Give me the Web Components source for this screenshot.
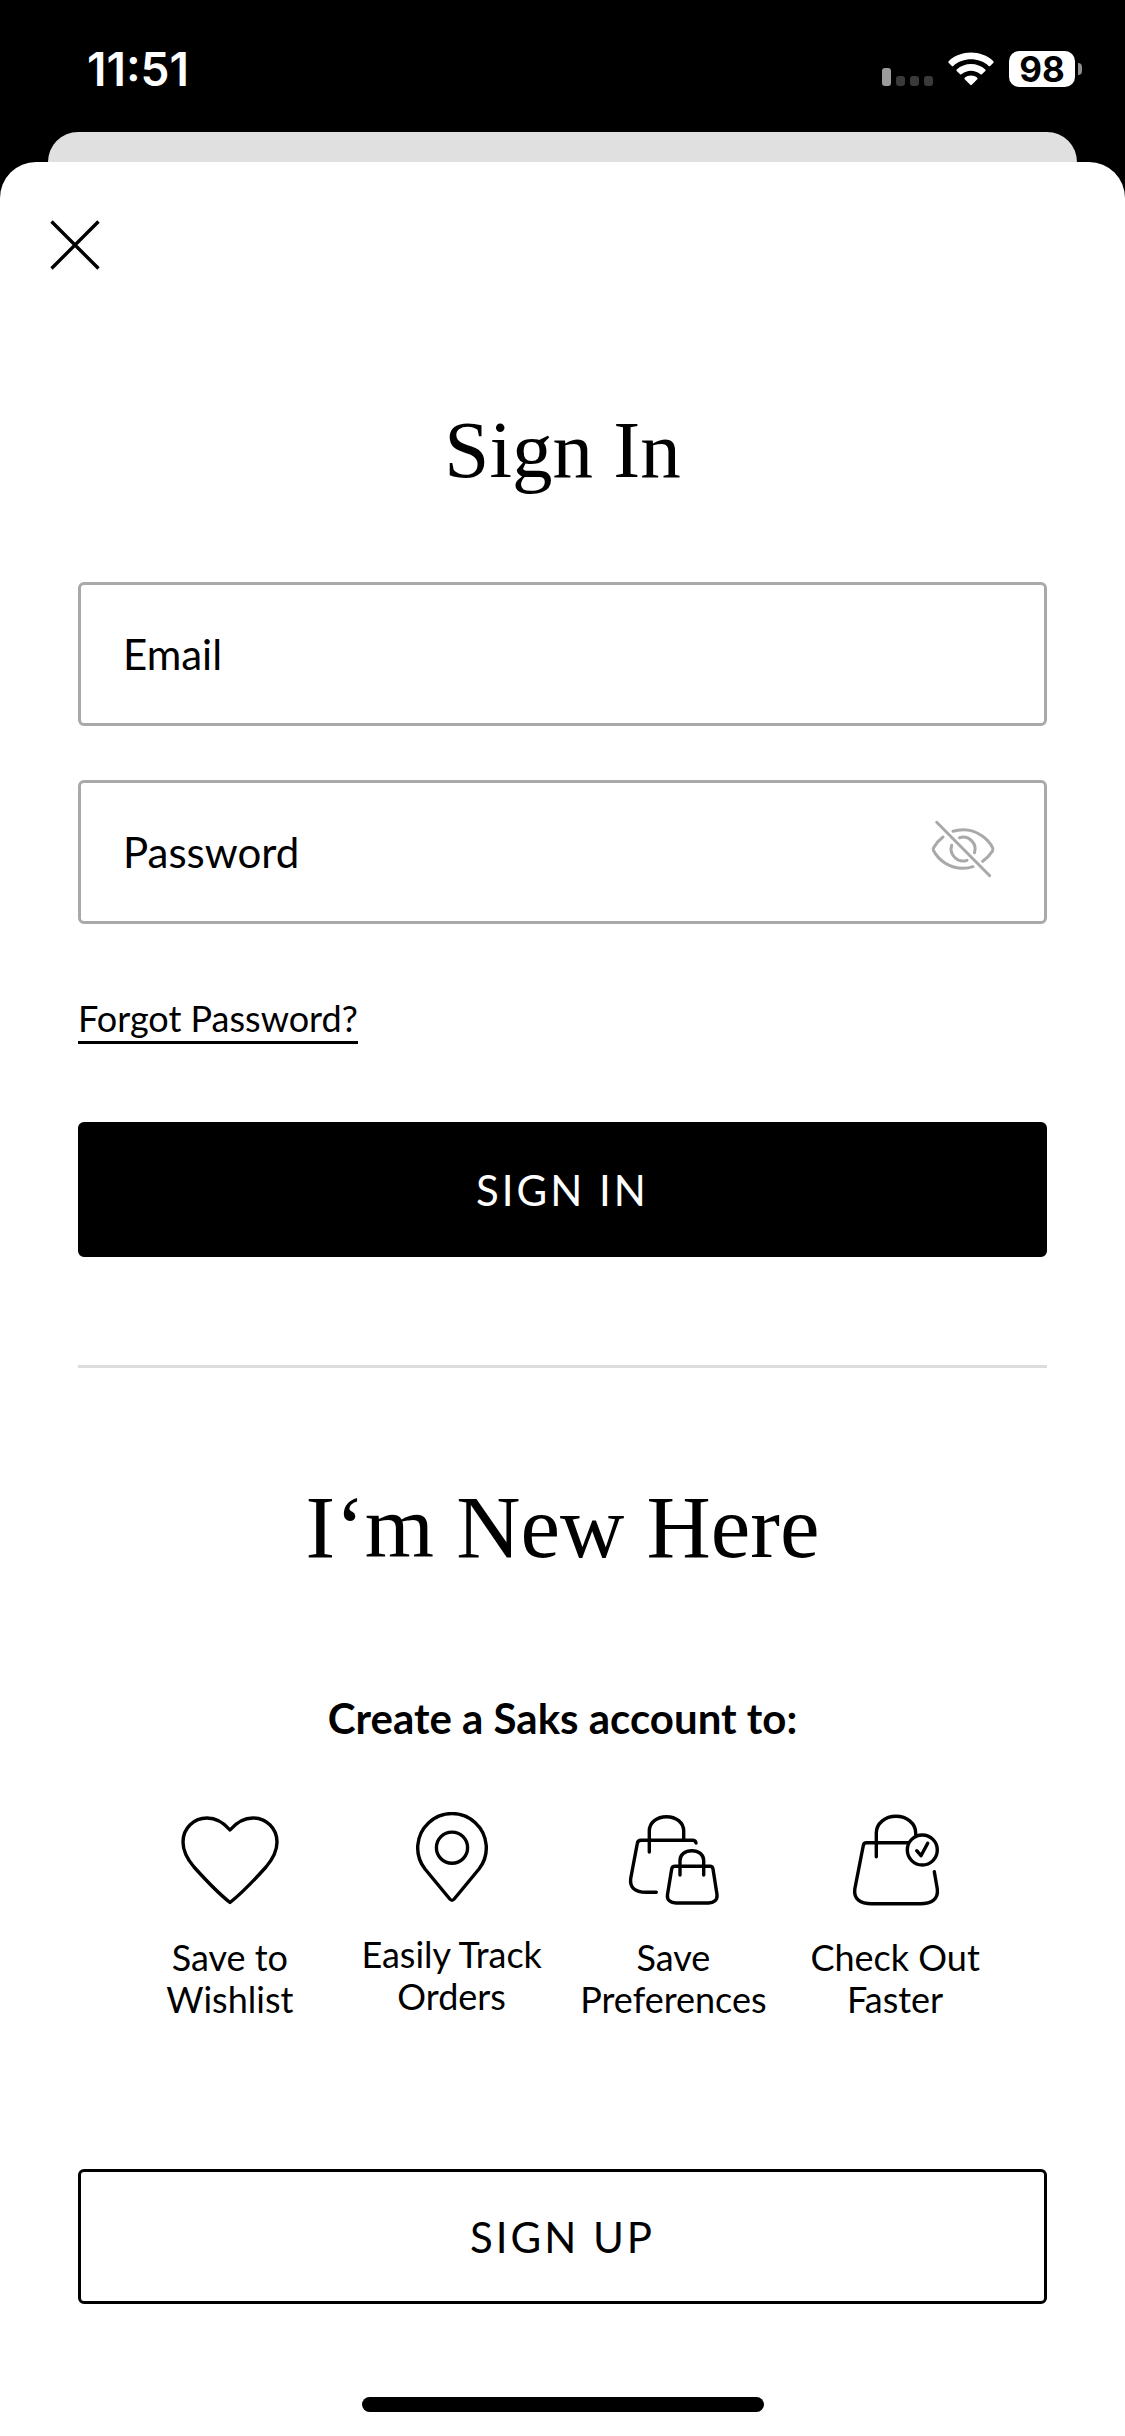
<!DOCTYPE html>
<html lang="en">
<head>
<meta charset="utf-8">
<meta name="viewport" content="width=device-width, initial-scale=1">
<title>Sign In</title>
<style>
  html { background: #000; }
  body {
    margin: 0;
    min-height: 100vh;
    display: flex;
    flex-direction: column;
    color: #000;
    font-family: Lato, "Liberation Sans", sans-serif;
  }
  account-sheet { flex: 1; }
</style>
</head>
<body>
  <status-bar time="11:51" battery="98"></status-bar>
  <account-sheet>
    <section-title size="small">Sign In</section-title>
    <sign-in-form></sign-in-form>
    <section-title slot="new">I‘m New Here</section-title>
    <benefit-list slot="new">
      <span slot="lead">Create a Saks account to:</span>
      <benefit-item icon="heart">Save to<br>Wishlist</benefit-item>
      <benefit-item icon="pin">Easily Track<br>Orders</benefit-item>
      <benefit-item icon="bags">Save<br>Preferences</benefit-item>
      <benefit-item icon="checkout">Check Out<br>Faster</benefit-item>
    </benefit-list>
    <action-button slot="new" kind="outline">SIGN UP</action-button>
  </account-sheet>

<script>
class BaseElement extends HTMLElement {
  connectedCallback() {
    if (this.shadowRoot) return;
    this.attachShadow({ mode: 'open' }).innerHTML =
      `<style>:host,*{box-sizing:border-box}${this.styles()}</style>${this.markup()}`;
  }
}

customElements.define('status-bar', class extends BaseElement {
  styles() {
    return `
      :host { display: flex; justify-content: space-between; align-items: center; height: 132px;
        padding: 6px 43px 0 87px; color: #fff; font-family: Inter, sans-serif; }
      .time { font-size: 46px; line-height: 54px; font-weight: 600; }
      .right { display: flex; align-items: center; }
      svg { display: block; }
      .wifi { margin: 0 15px; }
      .battery { display: flex; align-items: center; gap: 3px; }
      .level { width: 66px; height: 36px; border-radius: 10px; background: #fff; color: #000;
        font-size: 35px; line-height: 36px; font-weight: 700; text-align: center; }
      .tip { width: 4px; height: 12px; border-radius: 0 4px 4px 0; background: #8e8e8e; }`;
  }
  markup() {
    return `
      <div class="time">${this.getAttribute('time')}</div>
      <div class="right">
        <svg width="51" height="34" viewBox="0 0 51 34" aria-hidden="true">
          <rect y="16" width="9" height="18" rx="3" fill="#9b9b9b"/>
          <g fill="#3a3a3a"><rect x="14" y="24" width="9" height="10" rx="3"/><rect x="28" y="24" width="9" height="10" rx="3"/><rect x="42" y="24" width="9" height="10" rx="3"/></g>
        </svg>
        <svg class="wifi" width="46" height="34" viewBox="0 0 46 34" fill="#fff" aria-hidden="true">
          <path d="M0.6 9.2 C13-2.3 33-2.3 45.4 9.2 Q46 10 45.4 10.7 L42.2 13.9 Q41.4 14.5 40.7 13.9 C31 5 15 5 5.300 13.900 Q4.600 14.500 3.800 13.900 L0.600 10.700 Q0 10 0.600 9.200Z"/>
          <path d="M8.700 17.600 C16.500 10.200 29.500 10.200 37.300 17.600 Q38 18.300 37.300 19 L33.900 22.300 Q33.200 22.900 32.500 22.300 C27 17.500 19 17.500 13.500 22.300 Q12.800 22.900 12.100 22.300 L8.700 19 Q8 18.300 8.700 17.600Z"/>
          <path d="M16.700 25.800 C20.300 22.700 25.700 22.700 29.300 25.800 Q30 26.500 29.300 27.200 L23.800 32.800 Q23 33.500 22.200 32.800 L16.700 27.200 Q16 26.500 16.700 25.800Z"/>
        </svg>
        <div class="battery"><div class="level">${this.getAttribute('battery')}</div><div class="tip"></div></div>
      </div>`;
  }
});

customElements.define('account-sheet', class extends BaseElement {
  styles() {
    return `
      :host { display: flex; flex-direction: column; }
      .behind { height: 30px; margin: 0 48px; border-radius: 30px 30px 0 0; background: #e0e0e0; }
      .sheet { flex: 1; display: flex; flex-direction: column; background: #fff; border-radius: 36px 36px 0 0; padding: 58px 0 24px; }
      .close { align-self: flex-start; margin-left: 50px; padding: 0; border: 0; background: none; cursor: pointer; }
      .close svg { display: block; }
      main { display: flex; flex-direction: column; padding: 138px 78px 93px; }
      hr { width: 100%; height: 3px; margin: 108px 0 111px; border: 0; background: #ddd; }
      .home { align-self: center; width: 402px; max-width: 60%; height: 15px; border-radius: 8px; background: #000; }`;
  }
  markup() {
    return `
      <div class="behind"></div>
      <div class="sheet">
        <button class="close" type="button" aria-label="Close">
          <svg width="50" height="50" viewBox="0 0 50 50" fill="none" stroke="#000" stroke-width="3.400"><path d="M1.500 1.500 48.500 48.500M48.500 1.500 1.500 48.500"/></svg>
        </button>
        <main><slot></slot><hr><slot name="new"></slot></main>
        <div class="home"></div>
      </div>`;
  }
});

customElements.define('section-title', class extends BaseElement {
  styles() {
    return `
      :host { display: block; }
      h1 { margin: 0; text-align: center; font-family: "Liberation Serif", serif; font-weight: 400; font-size: 89px; line-height: 96px; }
      :host([size=small]) h1 { font-size: 81px; line-height: 84px; }`;
  }
  markup() { return '<h1><slot></slot></h1>'; }
});

customElements.define('text-field', class extends BaseElement {
  styles() {
    return `
      :host { display: flex; align-items: center; height: 144px; padding: 0 49px 0 42px; border: 3px solid #a9a9a9; border-radius: 6px; }
      label { font-size: 42px; line-height: 48px; }
      input { flex: 1; min-width: 0; height: 100%; padding: 0 16px; border: 0; outline: 0; background: none; font: inherit; font-size: 42px; }`;
  }
  markup() {
    return `
      <label for="field">${this.getAttribute('label')}</label>
      <input id="field" type="${this.getAttribute('type')}">
      <slot></slot>`;
  }
});

customElements.define('reveal-toggle', class extends BaseElement {
  styles() {
    return `
      :host { display: block; }
      button { display: block; padding: 0 0 4px; border: 0; background: none; cursor: pointer; }
      svg { display: block; }`;
  }
  markup() {
    return `
      <button type="button" aria-label="Show password">
        <svg width="64" height="60" viewBox="0 0 64 60" fill="none" stroke="#a9a9a9" stroke-width="3" stroke-linecap="round" stroke-linejoin="round">
          <path d="M5.700 2.300 58.700 55.700"/>
          <path d="M12 17 Q6 21.500 2.600 27.800 Q1.800 29.300 2.600 30.800 C7.500 40 18 48.300 32.300 48.300 Q37.500 48.300 42 46.700"/>
          <path d="M22 11.300 Q27 9.700 32.300 9.700 C46 9.700 57.500 19 61.600 27.800 Q62.300 29.300 61.600 30.800 Q57.500 37 51.700 41.300"/>
          <path d="M20.700 25.300 A12 12 0 0 0 36 40.300"/>
          <path d="M28.500 17.700 A12 12 0 0 1 43.500 32.700"/>
        </svg>
      </button>`;
  }
});

customElements.define('action-button', class extends BaseElement {
  styles() {
    return `
      :host { display: block; }
      button { display: block; width: 100%; height: 135px; border: 3px solid #000; border-radius: 6px; background: #000; color: #fff;
        font-family: inherit; font-size: 42px; line-height: 48px; letter-spacing: 3px; cursor: pointer; }
      :host([kind=outline]) button { background: #fff; color: #000; }`;
  }
  markup() { return '<button type="button"><slot></slot></button>'; }
});

customElements.define('sign-in-form', class extends BaseElement {
  styles() {
    return `
      :host { display: block; margin-top: 90px; }
      form { display: flex; flex-direction: column; }
      .fields { display: flex; flex-direction: column; gap: 54px; }
      a { align-self: flex-start; margin: 73px 0 78px; padding-bottom: 2px; border-bottom: 3px solid #000;
        color: inherit; text-decoration: none; font-size: 36px; line-height: 42px; }`;
  }
  markup() {
    return `
      <form>
        <div class="fields">
          <text-field label="Email" type="email"></text-field>
          <text-field label="Password" type="password"><reveal-toggle></reveal-toggle></text-field>
        </div>
        <a href="#forgot">Forgot Password?</a>
        <action-button>SIGN IN</action-button>
      </form>`;
  }
});

customElements.define('benefit-list', class extends BaseElement {
  styles() {
    return `
      :host { display: block; margin: 119px 0 149px; }
      p { margin: 0 0 70px; text-align: center; font-size: 42px; line-height: 48px; font-weight: 700; }
      .row { display: grid; grid-template-columns: repeat(4, 1fr); align-items: start; padding: 0 41px; }`;
  }
  markup() { return '<p><slot name="lead"></slot></p><div class="row"><slot></slot></div>'; }
});

const BENEFIT_ICONS = {
  heart: [96, '<path d="M50 18C44 11 36 6 27 6 14 6 3 16 3 30 3 40 8 48 14 55 23 65 38 81 50 90.500 62 81 77 65 86 55 92 48 97 40 97 30 97 16 86 6 73 6 64 6 56 11 50 18Z"/>'],
  pin: [93, '<path d="M23 57 47.800 87Q50 89.500 52.200 87L77 57A34.300 34.300 0 1 0 23 57Z"/><circle cx="50" cy="35.700" r="15.600"/>'],
  bags: [96, `<path d="M26.300 40V19C26.300 10.500 34 4.700 43.500 4.700S60.700 10.500 60.700 19V28"/>
    <path d="M33.300 80.300H23C12 80.300 6.500 75.500 7.700 66.500L14.300 31.500Q14.800 28.300 18 28.300H69.500Q72.500 28.300 73 31"/>
    <path d="M52 54.300H87Q89.500 54.300 90 57L94 82.500C94.600 88 91 91 85.500 91H53C47.500 91 43.700 88 44.500 82.500L48.700 57Q49.200 54.300 52 54.300Z"/>
    <path d="M57 63V48.500C57 42.500 62 38.700 68.800 38.700S80.700 42.500 80.700 48.500V63"/>`],
  checkout: [96, `<path d="M31.300 44.700V21C31.300 11.500 40 4.300 51 4.300S70.700 11.500 70.700 21V23"/>
    <path d="M63.300 30.700H21.500Q18.800 30.700 18.300 33.500L9.800 77C8.500 87 15 91.700 27 91.700H75C87 91.700 93.500 87 92.300 77L89.300 59.700"/>
    <circle cx="77.300" cy="38" r="15"/><path d="M71.700 38.700 76 43.700 82.700 31.300"/>`]
};

customElements.define('benefit-item', class extends BaseElement {
  styles() {
    return `
      :host { display: flex; flex-direction: column; align-items: center; gap: 28px; text-align: center; font-size: 36px; line-height: 42px; }
      svg { display: block; }`;
  }
  markup() {
    const [height, shapes] = BENEFIT_ICONS[this.getAttribute('icon')];
    return `
      <svg width="100" height="${height}" viewBox="0 0 100 ${height}" fill="none" stroke="#000" stroke-width="3.400" stroke-linecap="round" stroke-linejoin="round" aria-hidden="true">${shapes}</svg>
      <div><slot></slot></div>`;
  }
});
</script>
</body>
</html>
